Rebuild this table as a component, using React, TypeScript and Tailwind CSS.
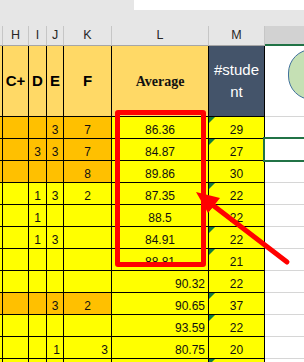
import React from "react";

type Row = {
  orange: boolean;
  i?: string;
  j?: string;
  k?: string;
  l: string;
  m: string;
  lRight?: boolean;
  jkRight?: boolean;
  tri: boolean;
};

const rows: Row[] = [
  { orange: true, j: "3", k: "7", l: "86.36", m: "29", tri: true },
  { orange: true, i: "3", j: "3", k: "7", l: "84.87", m: "27", tri: true },
  { orange: true, k: "8", l: "89.86", m: "30", tri: false },
  { orange: false, i: "1", j: "3", k: "2", l: "87.35", m: "22", tri: true },
  { orange: false, i: "1", l: "88.5", m: "22", tri: true },
  { orange: false, i: "1", j: "3", l: "84.91", m: "22", tri: true },
  { orange: false, l: "88.81", m: "21", tri: true },
  { orange: false, l: "90.32", lRight: true, m: "22", tri: false },
  { orange: true, j: "3", k: "2", l: "90.65", lRight: true, m: "37", tri: true },
  { orange: false, l: "93.59", lRight: true, m: "22", tri: true },
  { orange: false, j: "1", k: "3", jkRight: true, l: "80.75", lRight: true, m: "20", tri: false },
  { orange: false, l: "", m: "", tri: true },
];

const cell = "h-full flex items-end pb-[1px] leading-[14px] border-r border-b border-black";

function ColHead({ w, label }: { w: string; label?: string }) {
  return (
    <div className={`${w} h-full flex items-center justify-center border-r border-b border-r-[#c6c6c6] border-b-[#a6a6a6] text-[12.5px] text-[#262626]`}>
      {label}
    </div>
  );
}

function DataRow({ r }: { r: Row }) {
  const bg = r.orange ? "bg-[#ffc000]" : "bg-[#ffff00]";
  const jk = r.jkRight ? "justify-end pr-[3px]" : "justify-center";
  return (
    <div className="flex h-[22px] text-[12px] text-[#111]">
      <div className={`w-[3px] ${cell} ${bg}`} />
      <div className={`w-[26px] ${cell} ${bg}`} />
      <div className={`w-[18px] ${cell} ${bg} justify-center`}>{r.i}</div>
      <div className={`w-[17px] ${cell} ${bg} ${jk}`}>{r.j}</div>
      <div className={`w-[48px] ${cell} ${bg} ${jk}`}>{r.k}</div>
      <div className={`w-[97px] ${cell} bg-[#ffff00] ${r.lRight ? "justify-end pr-[3px]" : "justify-center"}`}>
        {r.l}
      </div>
      <div className={`relative w-[56px] ${cell} bg-[#ffff00] justify-center`}>
        {r.tri && (
          <svg className="absolute left-0 top-0" width="6" height="6" viewBox="0 0 6 6">
            <polygon points="0,0 6,0 0,6" fill="#107c41" />
          </svg>
        )}
        {r.m}
      </div>
      <div className="flex-1 h-full border-b border-[#d6d6d6] bg-white" />
    </div>
  );
}

export default function App() {
  return (
    <div className="relative w-[304px] h-[362px] overflow-hidden bg-white font-['Liberation_Sans',Arial,sans-serif]">
      {/* formula / ribbon strip */}
      <div className="flex h-[10px]">
        <div className="w-[134px] bg-[#e6e6e6]" />
        <div className="flex-1 bg-white" />
      </div>
      <div className="h-[16px] bg-[#e6e6e6]" />

      {/* column letters */}
      <div className="flex h-[20px] bg-[#e6e6e6]">
        <ColHead w="w-[3px]" />
        <ColHead w="w-[26px]" label="H" />
        <ColHead w="w-[18px]" label="I" />
        <ColHead w="w-[17px]" label="J" />
        <ColHead w="w-[48px]" label="K" />
        <ColHead w="w-[97px]" label="L" />
        <ColHead w="w-[56px]" label="M" />
        <div className="flex-1 h-full bg-[#d2d2d2] border-b-2 border-[#217346]" />
      </div>

      {/* header row */}
      <div className="flex h-[71px]">
        <div className="w-[3px] h-full bg-[#ffd966] border-r border-b border-black" />
        {["C+", "D", "E", "F"].map((t, idx) => (
          <div
            key={t}
            className={`${["w-[26px]", "w-[18px]", "w-[17px]", "w-[48px]"][idx]} h-full flex items-center justify-center bg-[#ffd966] border-r border-b border-black font-['Liberation_Sans',Arial,sans-serif] font-bold text-[15px] text-black`}
          >
            {t}
          </div>
        ))}
        <div className="w-[97px] h-full flex items-center justify-center bg-[#ffd966] border-r border-b border-black font-['Liberation_Serif','Times_New_Roman',serif] font-bold text-[14px] text-[#111]">
          Average
        </div>
        <div className="w-[56px] h-full flex flex-col items-center justify-center bg-[#44546a] border-r border-b border-black text-[15px] leading-[22px] text-white">
          <span>#stude</span>
          <span>nt</span>
        </div>
        <div className="flex-1 h-full bg-white border-b border-[#d6d6d6]" />
      </div>

      {rows.map((r, idx) => (
        <DataRow key={idx} r={r} />
      ))}

      {/* oval shape on the sheet */}
      <div className="absolute left-[288px] top-[49px] w-[48px] h-[51px] rounded-full bg-[#c5e0b4] border border-[#41719c]" />

      {/* active cell */}
      <div className="absolute left-[263px] top-[137px] w-[50px] h-[25px] border-2 border-[#217346]" />

      {/* red annotation */}
      <div className="absolute left-[115px] top-[110px] w-[91px] h-[157px] border-[5px] border-[#ff0000] rounded-[3px]" />
      <svg className="absolute left-0 top-0" width="304" height="362" viewBox="0 0 304 362">
        <line x1="287" y1="262" x2="210" y2="203" stroke="#ff0000" strokeWidth="5" strokeLinecap="round" />
        <polygon points="196,192 220,198 208,213" fill="#ff0000" />
      </svg>
    </div>
  );
}
